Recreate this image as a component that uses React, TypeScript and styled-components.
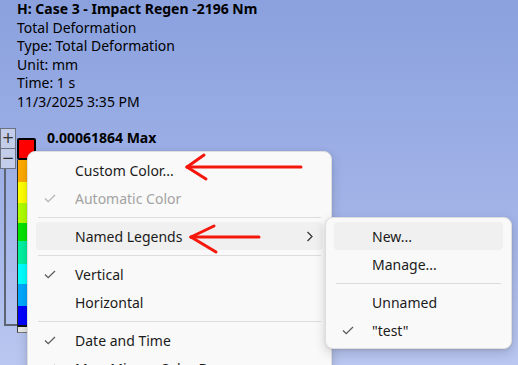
import React from "react";
import styled, { createGlobalStyle } from "styled-components";

const Global = createGlobalStyle`
  html, body { margin: 0; padding: 0; }
  body { font-family: "Noto Sans", "Open Sans", sans-serif; }
`;

const Viewport = styled.div`
  position: relative;
  width: 518px;
  height: 365px;
  overflow: hidden;
  background: linear-gradient(180deg, #8aa1de 0%, #a3b4e8 60%, #bac7f0 100%);
  font-family: "Noto Sans", "Open Sans", sans-serif;
  color: #000;
`;

const Info = styled.div`
  padding-left: 17px;
  font-size: 14px;
  line-height: 18.5px;
`;

const InfoLine = styled.div<{ $bold?: boolean }>`
  font-weight: ${(p) => (p.$bold ? 700 : 400)};
  white-space: nowrap;
`;

const LegendRow = styled.div`
  display: flex;
  align-items: flex-start;
  margin-top: 17px;
`;

const ZoomColumn = styled.div`
  display: flex;
  flex-direction: column;
  width: 16px;
`;

const ZoomButton = styled.div<{ $h: number }>`
  box-sizing: border-box;
  height: ${(p) => p.$h}px;
  border: 1px solid #6c7280;
  background: #c3cde9;
  display: flex;
  align-items: center;
  justify-content: center;
  font-family: "DejaVu Sans", sans-serif;
  font-size: 15px;
  color: #333;
  line-height: 1;
  & + & { border-top: none; }
`;

const Track = styled.div`
  box-sizing: border-box;
  width: 13px;
  height: 157px;
  margin-left: 4px;
  border-left: 2px solid #5d6474;
  border-bottom: 2px solid #5d6474;
`;

const ColorBar = styled.div`
  display: flex;
  flex-direction: column;
  margin-left: 1px;
  margin-top: 10px;
  width: 18px;
`;

const Swatch = styled.div<{ $c: string; $h: number; $sel?: boolean }>`
  box-sizing: border-box;
  height: ${(p) => p.$h}px;
  background: ${(p) => p.$c};
  border-left: 1px solid #2a2a2a;
  border-right: 1px solid #2a2a2a;
  ${(p) =>
    p.$sel
      ? `border: 2px solid #000; border-radius: 2px; width: 19px;`
      : ``}
`;

const BarEnd = styled.div`
  box-sizing: border-box;
  height: 8px;
  background: #e6e6e6;
  border-top: 2px solid #111;
  border-left: 1px solid #444;
  border-bottom: 1px solid #777;
`;

const Labels = styled.div`
  margin-left: 12px;
  margin-top: 0px;
`;

const MaxLabel = styled.div`
  font-size: 14px;
  font-weight: 700;
  line-height: 20px;
  white-space: nowrap;
`;

const Menu = styled.div<{ $left: number; $top: number; $w: number; $h?: number }>`
  position: absolute;
  left: ${(p) => p.$left}px;
  top: ${(p) => p.$top}px;
  width: ${(p) => p.$w}px;
  ${(p) => (p.$h ? `height: ${p.$h}px;` : "")}
  box-sizing: border-box;
  padding: 4px;
  background: #f9f9f9;
  border: 1px solid #dedede;
  border-radius: 8px;
  box-shadow: 0 4px 12px rgba(0, 0, 0, 0.16), 0 1px 3px rgba(0, 0, 0, 0.08);
  font-size: 14px;
  color: #1b1b1b;
`;

const Item = styled.div<{ $hover?: boolean; $disabled?: boolean; $textLeft: number }>`
  position: relative;
  display: flex;
  align-items: center;
  height: 28px;
  margin: 0 4px;
  padding-left: ${(p) => p.$textLeft}px;
  border-radius: 4px;
  background: ${(p) => (p.$hover ? "#f0f0f0" : "transparent")};
  color: ${(p) => (p.$disabled ? "#a3a3a3" : "#1b1b1b")};
  white-space: nowrap;
`;

const CheckSlot = styled.span<{ $left: number }>`
  position: absolute;
  left: ${(p) => p.$left}px;
  top: 10px;
  display: flex;
`;

const ChevronSlot = styled.span`
  position: absolute;
  right: 10px;
  top: 9px;
  display: flex;
`;

const Separator = styled.div`
  height: 1px;
  margin: 5px 6px 4px;
  background: #dcdcdc;
`;

const Arrows = styled.svg`
  position: absolute;
  left: 0;
  top: 0;
  pointer-events: none;
`;

const Check = ({ color }: { color: string }) => (
  <svg width="12" height="9" viewBox="0 0 12 9">
    <polyline points="1,4.5 4.2,7.6 11,1" fill="none" stroke={color} strokeWidth="1.3" />
  </svg>
);

const Chevron = () => (
  <svg width="7" height="11" viewBox="0 0 7 11">
    <polyline points="1.5,1 6,5.5 1.5,10" fill="none" stroke="#3a3a3a" strokeWidth="1.3" />
  </svg>
);

const swatches = [
  { c: "#ff0000", h: 22, sel: true },
  { c: "#ffaa00", h: 22 },
  { c: "#ffff00", h: 21 },
  { c: "#b0ff00", h: 20 },
  { c: "#00e400", h: 18 },
  { c: "#00f0a0", h: 23 },
  { c: "#00ffff", h: 20 },
  { c: "#00a8ff", h: 22 },
  { c: "#0000ff", h: 19 },
];

export default function App() {
  return (
    <Viewport>
      <Global />
      <Info>
        <InfoLine $bold>H: Case 3 - Impact Regen -2196 Nm</InfoLine>
        <InfoLine>Total Deformation</InfoLine>
        <InfoLine>Type: Total Deformation</InfoLine>
        <InfoLine>Unit: mm</InfoLine>
        <InfoLine>Time: 1 s</InfoLine>
        <InfoLine>11/3/2025 3:35 PM</InfoLine>
      </Info>
      <LegendRow>
        <ZoomColumn>
          <ZoomButton $h={21}>+</ZoomButton>
          <ZoomButton $h={20}>−</ZoomButton>
          <Track />
        </ZoomColumn>
        <ColorBar>
          {swatches.map((s, i) => (
            <Swatch key={i} $c={s.c} $h={s.h} $sel={s.sel} />
          ))}
          <BarEnd />
        </ColorBar>
        <Labels>
          <MaxLabel>0.00061864 Max</MaxLabel>
        </Labels>
      </LegendRow>

      <Menu $left={27} $top={151} $w={305} $h={240}>
        <Item $textLeft={39}>Custom Color...</Item>
        <Item $textLeft={39} $disabled>
          <CheckSlot $left={8}><Check color="#b4b4b4" /></CheckSlot>
          Automatic Color
        </Item>
        <Separator />
        <Item $textLeft={39} $hover>
          Named Legends
          <ChevronSlot><Chevron /></ChevronSlot>
        </Item>
        <Separator />
        <Item $textLeft={39}>
          <CheckSlot $left={8}><Check color="#5a5a5a" /></CheckSlot>
          Vertical
        </Item>
        <Item $textLeft={39}>Horizontal</Item>
        <Separator />
        <Item $textLeft={39}>
          <CheckSlot $left={8}><Check color="#5a5a5a" /></CheckSlot>
          Date and Time
        </Item>
        <Item $textLeft={39}>
          <CheckSlot $left={8}><Check color="#5a5a5a" /></CheckSlot>
          Max, Min on Color Bar
        </Item>
      </Menu>

      <Menu $left={325} $top={217} $w={187}>
        <Item $textLeft={38} $hover>New...</Item>
        <Item $textLeft={38}>Manage...</Item>
        <Separator />
        <Item $textLeft={38}>Unnamed</Item>
        <Item $textLeft={38}>
          <CheckSlot $left={8}><Check color="#5a5a5a" /></CheckSlot>
          "test"
        </Item>
      </Menu>

      <Arrows width="518" height="365" viewBox="0 0 518 365">
        <g stroke="#f4170b" strokeWidth="3" strokeLinecap="round" fill="none">
          <line x1="187" y1="167" x2="301" y2="167" />
          <line x1="187" y1="167" x2="204" y2="155" />
          <line x1="187" y1="167" x2="206" y2="179" />
          <line x1="191" y1="237" x2="259" y2="237" />
          <line x1="191" y1="237" x2="214" y2="226" />
          <line x1="191" y1="237" x2="216" y2="252" />
        </g>
      </Arrows>
    </Viewport>
  );
}
